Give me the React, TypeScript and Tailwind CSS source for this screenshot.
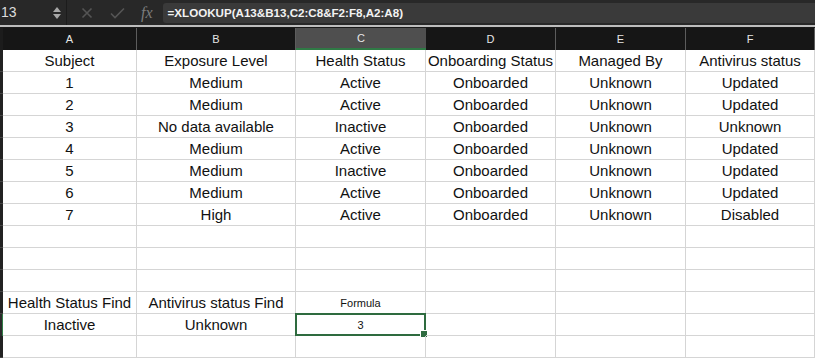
import { Fragment, type JSX } from "react"

const cols = ["A", "B", "C", "D", "E", "F"]

const rows: string[][] = [
    ["Subject", "Exposure Level", "Health Status", "Onboarding Status", "Managed By", "Antivirus status"],
    ["1", "Medium", "Active", "Onboarded", "Unknown", "Updated"],
    ["2", "Medium", "Active", "Onboarded", "Unknown", "Updated"],
    ["3", "No data available", "Inactive", "Onboarded", "Unknown", "Unknown"],
    ["4", "Medium", "Active", "Onboarded", "Unknown", "Updated"],
    ["5", "Medium", "Inactive", "Onboarded", "Unknown", "Updated"],
    ["6", "Medium", "Active", "Onboarded", "Unknown", "Updated"],
    ["7", "High", "Active", "Onboarded", "Unknown", "Disabled"],
    ["", "", "", "", "", ""],
    ["", "", "", "", "", ""],
    ["", "", "", "", "", ""],
    ["Health Status Find", "Antivirus status Find", "Formula", "", "", ""],
    ["Inactive", "Unknown", "3", "", "", ""],
    ["", "", "", "", "", ""],
]

const App = (): JSX.Element => {
    return (
        <div className="w-[815px] h-[358px] overflow-hidden bg-white font-['Liberation_Sans',Arial,sans-serif]">
            {/* formula bar */}
            <div className="h-[25px] bg-[#282828] flex items-center">
                <div className="w-[48px] pl-[1px] text-[14px] text-[#dcdcdc]">13</div>
                <div className="w-[17px] flex flex-col items-center gap-[2px]">
                    <div className="w-0 h-0 border-l-[4px] border-r-[4px] border-b-[5px] border-l-transparent border-r-transparent border-b-[#a8a8a8]"></div>
                    <div className="w-0 h-0 border-l-[4px] border-r-[4px] border-t-[5px] border-l-transparent border-r-transparent border-t-[#a8a8a8]"></div>
                </div>
                <div className="w-[1px] h-[25px] bg-[#1c1c1c] ml-[1px]"></div>
                <div className="flex items-center gap-[14px] pl-[14px] pr-[10px]">
                    <svg width="12" height="12" viewBox="0 0 12 12" className="mt-[1px]">
                        <path d="M1.5 1.5 L10.5 10.5 M10.5 1.5 L1.5 10.5" stroke="#555" strokeWidth="1.6" fill="none" />
                    </svg>
                    <svg width="15" height="12" viewBox="0 0 15 12" className="ml-[3px]">
                        <path d="M1 6.5 L5 10.5 L14 1.5" stroke="#555" strokeWidth="1.6" fill="none" />
                    </svg>
                    <span className="font-['Liberation_Serif',serif] italic text-[16px] text-[#7c7c7c] ml-[2px]">fx</span>
                </div>
                <div className="flex-1 h-[20px] bg-[#3a3a3a] rounded-l-[3px] flex items-center pl-[5px] text-[11.6px] font-semibold text-[#f2f2f2] whitespace-nowrap">
                    =XLOOKUP(A13&amp;B13,C2:C8&amp;F2:F8,A2:A8)
                </div>
            </div>
            <div className="h-[2px] bg-[#bdbdbd]"></div>
            <div className="h-[1px] bg-[#1a1a1a]"></div>

            {/* sheet */}
            <div className="grid grid-cols-[3px_134px_159px_130px_130px_130px_1fr] auto-rows-[22px] text-[15px] text-[#111]">
                <div className="bg-[#1c1c1c]"></div>
                {cols.map((c) => (
                    <div
                        key={c}
                        className={
                            c === "C"
                                ? "bg-[#4f4f4f] border-b-2 border-[#2f7a45] flex items-center justify-center text-[11px] text-[#e6e6e6]"
                                : "bg-[#161616] border-r border-[#5c5c5c] flex items-center justify-center text-[11px] text-[#e6e6e6]"
                        }
                    >
                        {c}
                    </div>
                ))}

                {rows.map((r, i) => (
                    <Fragment key={i}>
                        <div className={i === 12 ? "bg-[#2b2b2b] border-r border-[#2f7a45]" : "bg-[#222] border-b border-[#444]"}></div>
                        {r.map((v, j) => {
                            const small = i >= 11 && j === 2
                            const selected = i === 12 && j === 2
                            return (
                                <div
                                    key={j}
                                    className={`relative border-r border-b border-[#d5d5d5] flex items-center justify-center whitespace-nowrap pt-[1px] ${small ? "text-[11px] pt-[2px]" : ""}`}
                                >
                                    {v}
                                    {selected && (
                                        <>
                                            <div className="absolute -left-[1px] -top-[1px] -right-[1px] -bottom-[1px] border-2 border-[#2e6b3f]"></div>
                                            <div className="absolute -right-[3px] -bottom-[3px] w-[6px] h-[6px] bg-[#2e6b3f] border border-white box-content"></div>
                                        </>
                                    )}
                                </div>
                            )
                        })}
                    </Fragment>
                ))}
            </div>
        </div>
    )
}

export default App
